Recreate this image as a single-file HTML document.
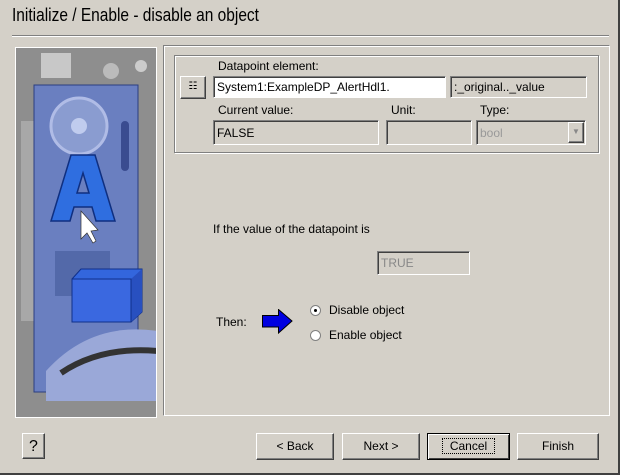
<!DOCTYPE html>
<html><head><style>
body{margin:0;width:620px;height:475px;background:#d4d0c8;font-family:"Liberation Sans",sans-serif;font-size:12px;color:#000;position:relative;overflow:hidden}
.a{position:absolute}
.sunk{position:absolute;border:1px solid;border-color:#808080 #fff #fff #808080}
.etch{position:absolute;border:1px solid #808080;box-shadow:1px 1px 0 #fff, inset 1px 1px 0 #fff}
.field{position:absolute;box-sizing:border-box;border:1px solid;border-color:#808080 #fff #fff #808080;box-shadow:inset 1px 1px 0 #404040;padding:3px 0 0 3px;font-size:12px;height:22px;white-space:nowrap}
.btn{position:absolute;box-sizing:border-box;border:1px solid;border-color:#fff #404040 #404040 #fff;box-shadow:inset -1px -1px 0 #808080;text-align:center;font-size:12px;height:27px;line-height:25px}
.lbl{position:absolute;font-size:11px;color:#000}
</style></head><body>
<div class="a" style="left:0;top:0;width:618px;height:473px;border-right:2px solid #404040;border-bottom:2px solid #404040;box-sizing:content-box"></div>
<div class="a" style="left:12px;top:5px;font-size:18px;transform:scaleX(0.86);transform-origin:0 0;white-space:nowrap">Initialize / Enable - disable an object</div>
<div class="a" style="left:12px;top:35px;width:597px;height:1px;background:#808080;border-bottom:1px solid #fff"></div>

<!-- image -->
<div class="a" style="left:15px;top:47px;width:142px;height:371px;background:#9a9a9a;border:1px solid #fff;box-sizing:border-box;overflow:hidden">
<svg width="142" height="371" viewBox="15 47 142 371">
<rect x="15" y="47" width="142" height="371" fill="#8e8e8e"/>
<rect x="40" y="52" width="30" height="25" fill="#c8c8c8"/>
<circle cx="110" cy="70" r="8" fill="#bbb"/><circle cx="140" cy="65" r="6" fill="#ccc"/>
<rect x="20" y="120" width="15" height="200" fill="#a8a8a8"/>
<rect x="33" y="84" width="104" height="307" fill="#6a7fc0" stroke="#2b3e80"/>
<circle cx="78" cy="125" r="28" fill="#8a9cd0" stroke="#b0bce6" stroke-width="3"/>
<circle cx="78" cy="125" r="8" fill="#c0ccee"/>
<rect x="120" y="120" width="8" height="50" rx="4" fill="#3a4c90"/>
<path d="M45 370 Q90 320 157 330 L157 400 L45 400Z" fill="#9aa8d8"/>
<path d="M60 372 Q100 345 157 350" stroke="#333" stroke-width="6" fill="none"/>
<path d="M50 220 L70 154 L94 154 L114 220 L95 220 L91 206 L73 206 L69 220Z M76 192 L88 192 L82 172Z" fill="#2f6ee0" stroke="#0f2f80" stroke-width="1.5"/>
<path d="M80 210 L80 238 L86 232 L92 242 L95 240 L90 230 L97 229Z" fill="#fff" stroke="#333" stroke-width="0.7"/>
<rect x="54" y="250" width="55" height="45" fill="#4a5fa0" opacity="0.7"/>
<path d="M71 278 L80 268 L141 268 L141 311 L130 321 L71 321Z" fill="#3366dd" stroke="#10308a"/>
<path d="M130 278 L141 268 L141 311 L130 321Z" fill="#2850c0"/>
<rect x="71" y="278" width="59" height="43" fill="#3a68e0" stroke="#10308a"/>
</svg></div>

<!-- panel -->
<div class="sunk" style="left:163px;top:45px;width:445px;height:369px;box-shadow:1px 1px 0 #fff inset"></div>
<div class="etch" style="left:174px;top:55px;width:423px;height:96px"></div>
<div class="lbl" style="left:218px;top:59px;font-size:12px">Datapoint element:</div>
<div class="btn" style="left:180px;top:76px;width:26px;height:23px;line-height:20px;font-size:10px">&#9783;</div>
<div class="field" style="left:213px;top:76px;width:233px;background:#fff;box-shadow:inset 1px 1px 0 #404040">System1:ExampleDP_AlertHdl1.</div>
<div class="field" style="left:450px;top:76px;width:137px">:_original.._value</div>
<div class="lbl" style="left:218px;top:103px;font-size:12px">Current value:</div>
<div class="lbl" style="left:391px;top:103px;font-size:12px">Unit:</div>
<div class="lbl" style="left:480px;top:103px;font-size:12px">Type:</div>
<div class="field" style="left:213px;top:120px;width:166px;height:25px;padding-top:5px">FALSE</div>
<div class="field" style="left:386px;top:120px;width:86px;height:25px"></div>
<div class="field" style="left:476px;top:120px;width:110px;height:25px;padding-top:5px;color:#999">bool
<div class="btn" style="left:91px;top:1px;width:16px;height:21px;line-height:18px;font-size:8px;color:#888">&#9660;</div></div>

<div class="a" style="left:213px;top:222px">If the value of the datapoint is</div>
<div class="field" style="left:377px;top:251px;width:93px;height:24px;padding-top:4px;color:#888">TRUE</div>
<div class="a" style="left:216px;top:315px">Then:</div>
<svg class="a" style="left:262px;top:309px" width="31" height="25"><path d="M0.5 6.5 H16.5 V0.5 L30 12 L16.5 24 V18 H0.5Z" fill="#0000e0" stroke="#000"/></svg>
<div class="a" style="left:310px;top:305px;width:11px;height:11px;border-radius:50%;background:#fff;border:1px solid #808080;box-sizing:border-box"><div style="position:absolute;left:3px;top:3px;width:3px;height:3px;background:#000;border-radius:50%"></div></div>
<div class="a" style="left:329px;top:303px">Disable object</div>
<div class="a" style="left:310px;top:330px;width:11px;height:11px;border-radius:50%;background:#fff;border:1px solid #808080;box-sizing:border-box"></div>
<div class="a" style="left:329px;top:328px">Enable object</div>

<div class="btn" style="left:22px;top:433px;width:23px;height:26px;font-size:16px">?</div>
<div class="btn" style="left:256px;top:433px;width:78px">&lt; Back</div>
<div class="btn" style="left:342px;top:433px;width:78px">Next &gt;</div>
<div class="btn" style="left:427px;top:433px;width:83px;border-color:#000;box-shadow:inset 1px 1px 0 #fff,inset -1px -1px 0 #404040"><span style="outline:1px dotted #000;padding:0 7px">Cancel</span></div>
<div class="btn" style="left:517px;top:433px;width:82px">Finish</div>
</body></html>
